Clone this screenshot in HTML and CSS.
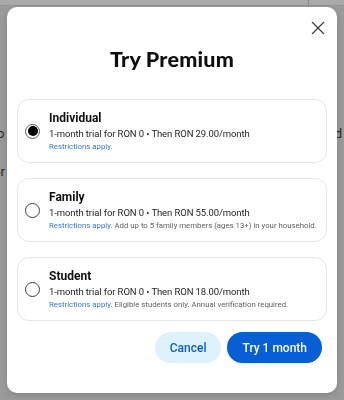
FILE: index.html
```html
<!DOCTYPE html>
<html>
<head>
<meta charset="utf-8">
<link rel="stylesheet" href="styles.css">
</head>
<body>
<div class="page">
  <div class="topbar"><span class="topbar-fill"></span><span class="topbar-end"></span></div>
  <div class="bg-line bg-line-1"><span class="frag-left">o</span><span class="frag-right">d</span></div>
  <div class="bg-line bg-line-2"><span class="frag-left">-r</span></div>
</div>
<div class="modal" role="dialog">
  <button class="close" aria-label="Close">
    <svg width="14" height="14" viewBox="0 0 14 14"><path d="M1 1 L13 13 M13 1 L1 13" stroke="#3a3a3a" stroke-width="1.2" fill="none"/></svg>
  </button>
  <h1 class="title">Try Premium</h1>
  <div class="plans">
    <label class="plan">
      <span class="radio checked"><span class="dot"></span></span>
      <span class="info">
        <span class="name">Individual</span>
        <span class="price">1-month trial for RON 0 • Then RON 29.00/month</span>
        <span class="note"><span class="link">Restrictions apply.</span></span>
      </span>
    </label>
    <label class="plan">
      <span class="radio"></span>
      <span class="info">
        <span class="name">Family</span>
        <span class="price">1-month trial for RON 0 • Then RON 55.00/month</span>
        <span class="note"><span class="link">Restrictions apply.</span> Add up to 5 family members (ages 13+) in your household.</span>
      </span>
    </label>
    <label class="plan">
      <span class="radio"></span>
      <span class="info">
        <span class="name">Student</span>
        <span class="price">1-month trial for RON 0 • Then RON 18.00/month</span>
        <span class="note"><span class="link">Restrictions apply.</span> Eligible students only. Annual verification required.</span>
      </span>
    </label>
  </div>
  <div class="actions">
    <button class="btn btn-cancel">Cancel</button>
    <button class="btn btn-primary">Try 1 month</button>
  </div>
</div>
</body>
</html>
```

FILE: styles.css
```css
html, body {
  margin: 0;
  padding: 0;
}
body {
  width: 344px;
  height: 400px;
  background: #9a9a9a;
  font-family: Roboto, "Liberation Sans", sans-serif;
  overflow: hidden;
}
.page {
  height: 400px;
  display: flex;
  flex-direction: column;
}
.topbar {
  height: 5px;
  display: flex;
  background: #a9a9a9;
  border-bottom: 1px solid #939393;
}
.topbar-fill {
  width: 308px;
  border-right: 1px solid #8c8c8c;
}
.bg-line {
  display: flex;
  justify-content: space-between;
  font-size: 13px;
  color: #2a2a2a;
  line-height: 16px;
}
.bg-line-1 {
  margin-top: 120px;
}
.bg-line-2 {
  margin-top: 22px;
}
.frag-left {
  margin-left: -3px;
}
.frag-right {
  margin-right: 2px;
}
.modal {
  position: fixed;
  left: 7px;
  top: 7px;
  width: 330px;
  height: 386px;
  box-sizing: border-box;
  background: #fff;
  border-radius: 10px;
  box-shadow: 0 2px 6px rgba(0,0,0,0.15);
  padding: 38px 10px 0;
  display: flex;
  flex-direction: column;
}
.close {
  position: absolute;
  right: 12px;
  top: 14px;
  width: 14px;
  height: 14px;
  padding: 0;
  border: 0;
  background: none;
  display: flex;
}
.title {
  margin: 0;
  text-align: center;
  font-family: Lato, "Open Sans", sans-serif;
  font-weight: 900;
  font-size: 21.5px;
  line-height: 28px;
  color: #0f0f0f;
  letter-spacing: 0.2px;
}
.plans {
  margin-top: 26px;
  display: flex;
  flex-direction: column;
  gap: 15px;
}
.plan {
  height: 64px;
  box-sizing: border-box;
  border: 1px solid #e6e6e6;
  border-radius: 12px;
  display: flex;
  align-items: center;
  padding-left: 7px;
  gap: 9px;
}
.radio {
  width: 15px;
  height: 15px;
  box-sizing: border-box;
  border-radius: 50%;
  border: 1.3px solid #3d3d3d;
  flex: none;
  display: flex;
  align-items: center;
  justify-content: center;
}
.radio.checked {
  border-color: #5a5a5a;
}
.dot {
  width: 10px;
  height: 10px;
  border-radius: 50%;
  background: #000;
}
.info {
  display: flex;
  flex-direction: column;
}
.name {
  font-size: 12px;
  line-height: 16px;
  font-weight: 700;
  color: #0f0f0f;
}
.price {
  font-size: 9.5px;
  letter-spacing: -0.1px;
  line-height: 15px;
  color: #1f1f1f;
}
.note {
  font-size: 7.8px;
  line-height: 11px;
  color: #606060;
}
.link {
  color: #3a78c9;
}
.actions {
  margin-top: 11px;
  padding-right: 5px;
  display: flex;
  justify-content: flex-end;
  gap: 6px;
}
.btn {
  height: 31px;
  padding: 0 15px;
  border: 0;
  border-radius: 16px;
  font-family: Roboto, "Liberation Sans", sans-serif;
  font-size: 12px;
  font-weight: 500;
}
.btn-cancel {
  background: #def1ff;
  color: #065fd4;
}
.btn-primary {
  background: #065fd4;
  color: #fff;
}
```
